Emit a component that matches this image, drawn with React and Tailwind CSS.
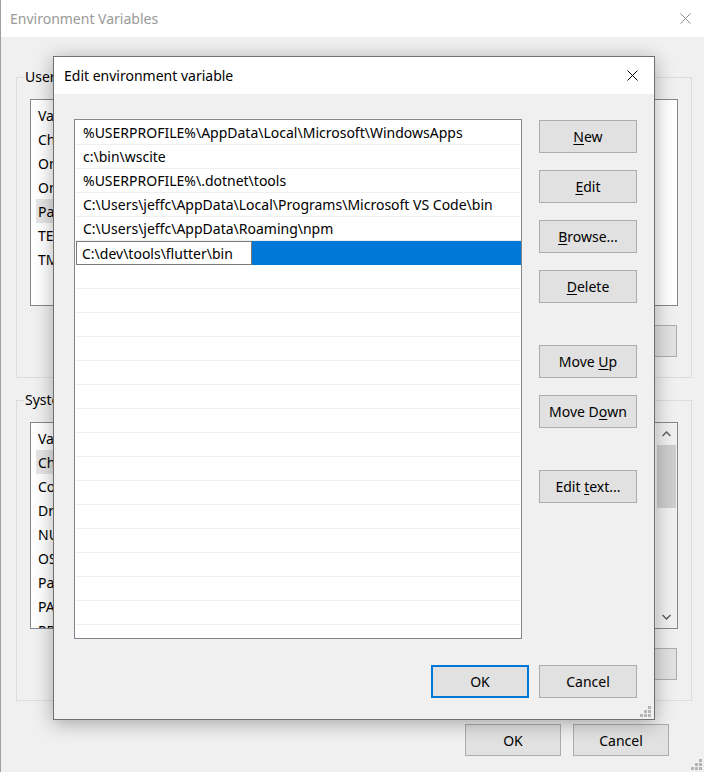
import React from "react";

const USER_VARS = ["Variable", "ChocolateyLastPathUpdate", "OneDrive", "OneDriveConsumer", "Path", "TEMP", "TMP"];
const SYSTEM_VARS = [
  "Variable",
  "ChocolateyInstall",
  "ComSpec",
  "DriverData",
  "NUMBER_OF_PROCESSORS",
  "OS",
  "Path",
  "PATHEXT",
  "PROCESSOR_ARCHITECTURE",
];

const PATHS = [
  "%USERPROFILE%\\AppData\\Local\\Microsoft\\WindowsApps",
  "c:\\bin\\wscite",
  "%USERPROFILE%\\.dotnet\\tools",
  "C:\\Users\\jeffc\\AppData\\Local\\Programs\\Microsoft VS Code\\bin",
  "C:\\Users\\jeffc\\AppData\\Roaming\\npm",
];

function CloseIcon({ color = "#000" }) {
  return (
    <svg width="11" height="11" viewBox="0 0 11 11">
      <path d="M0.5 0.5 L10.5 10.5 M10.5 0.5 L0.5 10.5" stroke={color} strokeWidth="1" fill="none" />
    </svg>
  );
}

function Grip() {
  return (
    <svg width="11" height="11" viewBox="0 0 11 11">
      {[
        [8, 0],
        [4, 4],
        [8, 4],
        [0, 8],
        [4, 8],
        [8, 8],
      ].map(([x, y]) => (
        <rect key={`${x}-${y}`} x={x} y={y} width="3" height="3" fill="#b4b4b4" />
      ))}
    </svg>
  );
}

function Btn({ children, className = "" }) {
  return (
    <button
      className={`shrink-0 flex items-center justify-center bg-[#e1e1e1] border border-[#adadad] text-[14px] text-black ${className}`}
    >
      {children}
    </button>
  );
}

function BackList({ items, selected, scroll }) {
  return (
    <div className="relative h-[207px] border border-[#828790] bg-white overflow-hidden flex">
      <div className="flex-1 pt-[3px] pl-[5px]">
        {items.map((v, i) => (
          <div
            key={v + i}
            className={`h-[24px] w-[210px] flex items-center pl-[2px] ${i === selected ? "bg-[#e5e5e5]" : ""}`}
          >
            {v}
          </div>
        ))}
      </div>
      {scroll && (
        <div className="w-[21px] bg-[#f0f0f0] flex flex-col items-center">
          <div className="h-[22px] flex items-center justify-center">
            <svg width="9" height="6" viewBox="0 0 9 6">
              <path d="M0.5 5 L4.5 1 L8.5 5" stroke="#606060" strokeWidth="1.5" fill="none" />
            </svg>
          </div>
          <div className="w-[19px] h-[63px] bg-[#cdcdcd]" />
          <div className="flex-1" />
          <div className="h-[22px] flex items-center justify-center">
            <svg width="9" height="6" viewBox="0 0 9 6">
              <path d="M0.5 1 L4.5 5 L8.5 1" stroke="#606060" strokeWidth="1.5" fill="none" />
            </svg>
          </div>
        </div>
      )}
    </div>
  );
}

function Group({ label, items, selected, scroll, mt }) {
  return (
    <div className={`relative h-[301px] border border-[#dcdcdc] pt-[21px] px-[13px] ${mt}`}>
      <span className="absolute left-[7px] -top-[11px] px-[1px] bg-[#f0f0f0] leading-[20px]">{label}</span>
      <BackList items={items} selected={selected} scroll={scroll} />
      <div className="mt-[19px] flex justify-end gap-[11px] pr-[1px]">
        <Btn className="w-[96px] h-[32px]">New...</Btn>
        <Btn className="w-[96px] h-[32px]">Edit...</Btn>
        <Btn className="w-[96px] h-[32px]">Delete</Btn>
      </div>
    </div>
  );
}

function BackWindow() {
  return (
    <div className="flex flex-col h-full">
      <div className="h-[37px] bg-white flex items-center justify-between pl-[9px] pr-[13px]">
        <span className="text-[14px] text-[#999999]">Environment Variables</span>
        <CloseIcon color="#8a8a8a" />
      </div>
      <div className="pl-[15px] pr-[12px] pt-[40px]">
        <Group label="User variables for jeffc" items={USER_VARS} selected={4} mt="" />
        <Group label="System variables" items={SYSTEM_VARS} selected={1} scroll mt="mt-[22px]" />
        <div className="mt-[23px] flex justify-end gap-[12px] pr-[23px]">
          <Btn className="w-[96px] h-[32px]">OK</Btn>
          <Btn className="w-[96px] h-[32px]">Cancel</Btn>
        </div>
      </div>
      <div className="absolute right-[2px] bottom-[2px]">
        <Grip />
      </div>
    </div>
  );
}

function EditDialog() {
  const rows = Array.from({ length: 22 }, (_, i) => i);
  return (
    <div className="absolute left-[52px] top-[56px] w-[602px] h-[664px] border border-[#6f6f6f] bg-[#f0f0f0] shadow-[0_3px_18px_rgba(0,0,0,0.32)] flex flex-col">
      <div className="h-[37px] bg-white flex items-center justify-between pl-[10px] pr-[16px]">
        <span className="text-[14px]">Edit environment variable</span>
        <CloseIcon />
      </div>
      <div className="flex pl-[20px] pt-[25px]">
        <div className="shrink-0 w-[448px] h-[520px] border border-[#828790] bg-white overflow-hidden pt-[1px]">
          {rows.map((i) => {
            if (i === 5) {
              return (
                <div key={i} className="h-[24px] ml-[1px] bg-[#0078d7] flex">
                  <div className="w-[176px] h-[24px] border border-[#7a7a7a] bg-white pl-[5px] flex items-center">
                    C:\dev\tools\flutter\bin
                  </div>
                </div>
              );
            }
            return (
              <div key={i} className="h-[24px] ml-[1px] border-b border-[#efefef] pl-[7px] flex items-center">
                {PATHS[i] || ""}
              </div>
            );
          })}
        </div>
        <div className="ml-[17px] flex flex-col">
          <Btn className="w-[98px] h-[33px] mt-[1px]">
            <span className="underline underline-offset-2">N</span>ew
          </Btn>
          <Btn className="w-[98px] h-[33px] mt-[17px]">
            <span className="underline underline-offset-2">E</span>dit
          </Btn>
          <Btn className="w-[98px] h-[33px] mt-[17px]">
            <span className="underline underline-offset-2">B</span>rowse...
          </Btn>
          <Btn className="w-[98px] h-[33px] mt-[17px]">
            <span className="underline underline-offset-2">D</span>elete
          </Btn>
          <Btn className="w-[98px] h-[33px] mt-[42px]">
            Move&nbsp;<span className="underline underline-offset-2">U</span>p
          </Btn>
          <Btn className="w-[98px] h-[33px] mt-[17px]">
            Move D<span className="underline underline-offset-2">o</span>wn
          </Btn>
          <Btn className="w-[98px] h-[33px] mt-[42px]">
            Edit&nbsp;<span className="underline underline-offset-2">t</span>ext...
          </Btn>
        </div>
      </div>
      <div className="mt-[26px] flex justify-end gap-[10px] pr-[17px]">
        <Btn className="w-[98px] h-[33px] !border-2 !border-[#0078d7]">OK</Btn>
        <Btn className="w-[98px] h-[33px]">Cancel</Btn>
      </div>
      <div className="absolute right-[3px] bottom-[2px]">
        <Grip />
      </div>
    </div>
  );
}

export default function App() {
  return (
    <div className="relative w-[704px] h-[772px] overflow-hidden bg-[#f0f0f0] border-l border-[#a0a0a0] font-['Noto_Sans',sans-serif] text-[14px] text-black">
      <BackWindow />
      <EditDialog />
    </div>
  );
}
